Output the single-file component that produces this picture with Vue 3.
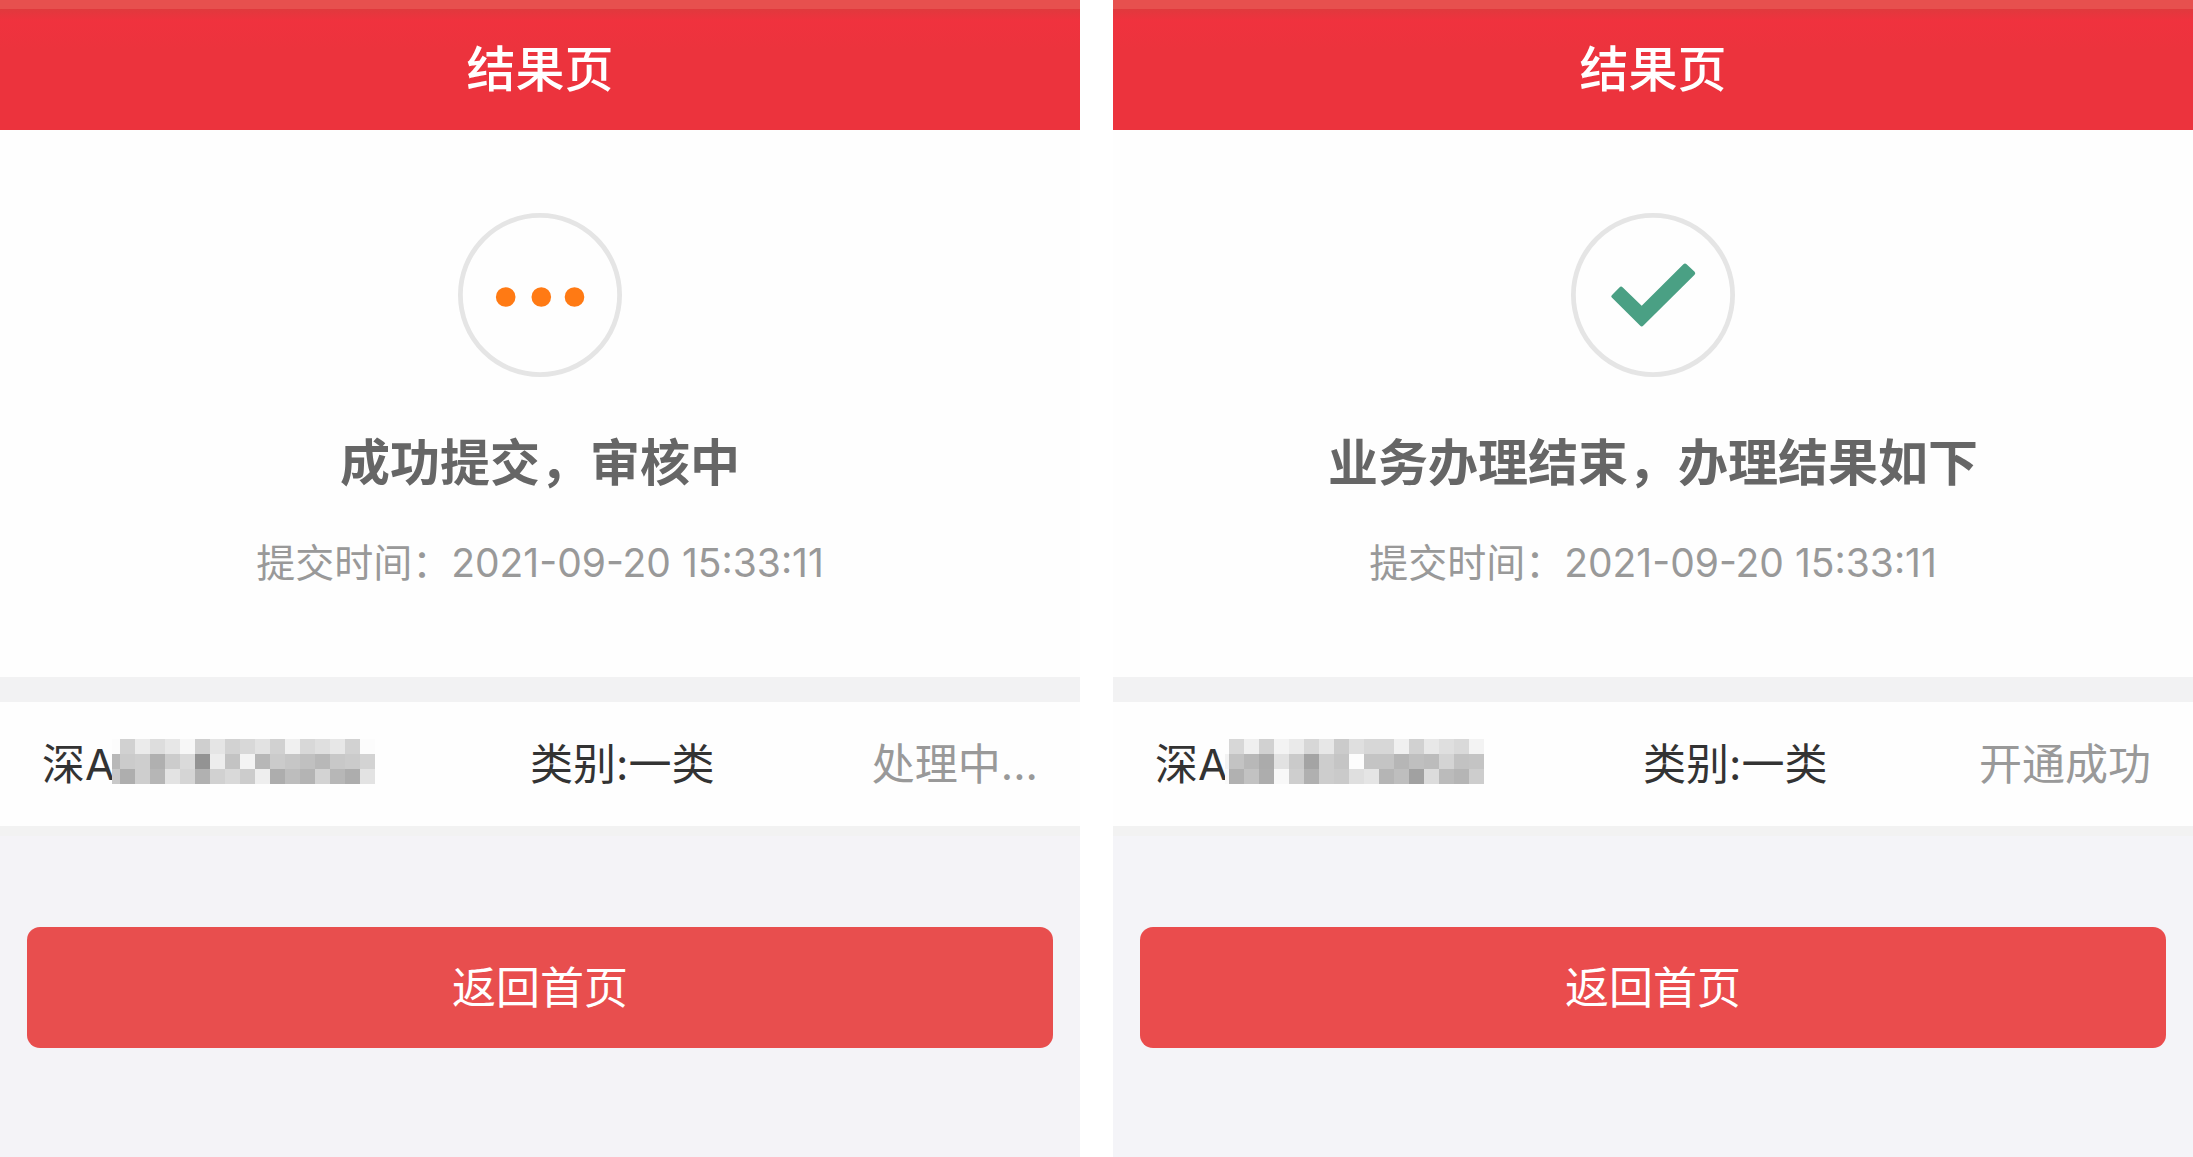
<script setup>
const CELL = 15

const screens = [
  {
    key: 'pending',
    title: '结果页',
    message: '成功提交，审核中',
    time: '2021-09-20 15:33:11',
    account: '深A',
    category: '类别:一类',
    status: '处理中...',
    lead: 8,
    mask: [
      'fc d1 eb dd e7 f7 cf e5 d2 d8 e2 d1 f0 d8 df e7 d2 fc',
      'b8 cb ce b0 cc da 93 ed c3 f4 b7 cb c6 c0 b8 c8 cb d3',
      'c9 ae ce b6 e3 d5 b1 d1 d9 cc ee ad bd b4 d3 b7 ad e3',
    ],
  },
  {
    key: 'done',
    title: '结果页',
    message: '业务办理结束，办理结果如下',
    time: '2021-09-20 15:33:11',
    account: '深A',
    category: '类别:一类',
    status: '开通成功',
    lead: 4,
    mask: [
      'fe d7 ef d1 f3 ea d7 e7 cb df d7 d7 f0 d1 e8 df d9 f3',
      'f3 c3 b8 ab e2 ca a4 cd c5 fd c4 c4 b6 bf bc d4 c2 c4',
      'fa b1 c2 ad f8 ce b0 cd ca df e5 b5 be a1 dc bb b5 cd',
    ],
  },
].map((s) => ({
  ...s,
  maskWidth: s.lead + 17 * CELL,
  cells: s.mask.flatMap((row, y) =>
    row.split(' ').map((v, i) => ({
      x: i === 0 ? 0 : s.lead + (i - 1) * CELL,
      y: y * CELL,
      w: i === 0 ? s.lead : CELL,
      fill: `#${v}${v}${v}`,
    })),
  ),
}))
</script>

<template>
  <div class="page">
    <main v-for="s in screens" :key="s.key" class="screen" :class="s.key">
      <header class="bar">
        <h1>{{ s.title }}</h1>
      </header>

      <section class="result">
        <svg class="badge" viewBox="0 0 164 164" aria-hidden="true">
          <circle cx="82" cy="82" r="79.6" fill="#fefefe" stroke="#e5e5e5" stroke-width="4.8" />
          <g v-if="s.key === 'pending'" fill="#ff7a14">
            <circle cx="47.7" cy="84" r="9.8" />
            <circle cx="83.3" cy="84" r="9.8" />
            <circle cx="116.5" cy="84" r="9.8" />
          </g>
          <path
            v-else
            d="M40.8 82.2 L48.4 74.4 Q50 72.8 51.8 74.4 L70.7 92.8 L112.4 51.2 Q114 49.8 115.6 51.2 L123.6 58.8 Q125 60.3 123.6 61.8 L72.4 112.6 Q70.7 114.4 69 112.6 L40.8 84.6 Q39.6 83.4 40.8 82.2 Z"
            fill="#4aa084"
          />
        </svg>
        <h2>{{ s.message }}</h2>
        <p class="time">提交时间：<time>{{ s.time }}</time></p>
      </section>

      <section class="row">
        <div class="account">
          <span>{{ s.account }}</span>
          <svg
            class="mask"
            :width="s.maskWidth"
            height="45"
            shape-rendering="crispEdges"
            aria-hidden="true"
          >
            <rect
              v-for="(c, i) in s.cells"
              :key="i"
              :x="c.x"
              :y="c.y"
              :width="c.w"
              height="15"
              :fill="c.fill"
            />
          </svg>
        </div>
        <span>{{ s.category }}</span>
        <span class="status">{{ s.status }}</span>
      </section>

      <footer class="actions">
        <button type="button">返回首页</button>
      </footer>
    </main>
  </div>
</template>

<style>
body {
  margin: 0;
  background: #fff;
}
</style>

<style scoped>
.page {
  display: grid;
  grid-template-columns: 1fr 1fr;
  gap: 33px;
  min-height: 100vh;
  font-family: Inter, 'Noto Sans CJK SC', sans-serif;
  color: #333;
}

.screen {
  display: flex;
  flex-direction: column;
  min-width: 0;
  background: #f4f3f7;
}

.screen.done {
  background: #f4f4f8;
}

.bar {
  display: flex;
  align-items: center;
  justify-content: center;
  box-sizing: border-box;
  height: 130px;
  border-top: 9px solid #e7504e;
  background: linear-gradient(#e0393d, #f0323e 12px, #ec333d 40px);
  color: #fff;
}

h1,
h2,
p {
  margin: 0;
}

h1 {
  font-size: 49px;
  line-height: 70px;
  font-weight: 500;
}

.result {
  display: flex;
  flex-direction: column;
  align-items: center;
  padding: 83px 28px 86px;
  background: #fefefe;
}

.badge {
  width: 164px;
  height: 164px;
}

h2 {
  margin-top: 51px;
  font-size: 50px;
  line-height: 70px;
  font-weight: 700;
  color: #666;
}

.time {
  margin-top: 37px;
  font-size: 39px;
  line-height: 56px;
  color: #999;
}

.row {
  display: grid;
  grid-template-columns: 49% 1fr auto;
  align-items: center;
  height: 124px;
  padding: 0 42px;
  border-top: 25px solid #f2f2f3;
  border-bottom: 10px solid #f2f2f2;
  background: #fefefe;
  font-size: 43px;
  line-height: 64px;
}

.account {
  display: flex;
  align-items: center;
}

.mask {
  display: block;
  flex: none;
  margin: 0 0 6px -3px;
}

.status {
  color: #999;
}

.actions {
  padding: 91px 27px;
}

button {
  display: block;
  width: 100%;
  height: 121px;
  padding: 0;
  border: 0;
  border-radius: 13px;
  background: #e84e4e;
  color: #fff;
  font-family: inherit;
  font-size: 44px;
  line-height: 64px;
}

.done button {
  background: #ea4c4d;
}
</style>
